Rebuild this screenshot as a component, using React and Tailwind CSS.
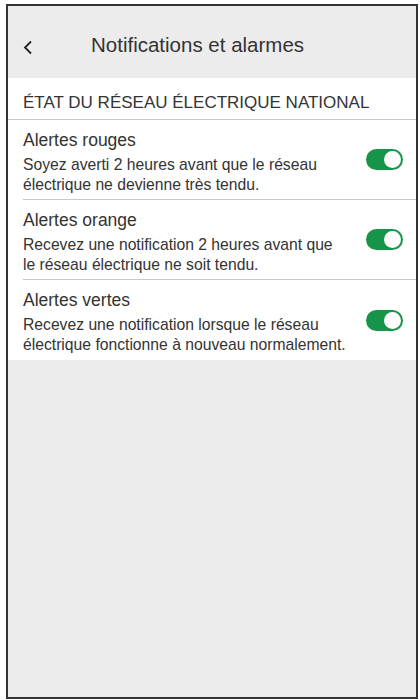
const alerts = [
  {
    title: 'Alertes rouges',
    lines: ['Soyez averti 2 heures avant que le réseau', 'électrique ne devienne très tendu.'],
  },
  {
    title: 'Alertes orange',
    lines: ['Recevez une notification 2 heures avant que', 'le réseau électrique ne soit tendu.'],
  },
  {
    title: 'Alertes vertes',
    lines: ['Recevez une notification lorsque le réseau', 'électrique fonctionne à nouveau normalement.'],
  },
];

const Toggle = () => (
  <div className="w-[37px] h-[21px] rounded-full bg-[#169447] flex items-center justify-end px-[2px] shrink-0">
    <div className="w-[17px] h-[17px] rounded-full bg-white" />
  </div>
);

const AlertRow = ({ title, lines, last }) => (
  <div className={`ml-[15px] h-[80px] flex items-center pr-[13px] ${last ? '' : 'border-b border-[#c8c8c8]'}`}>
    <div className="flex-1 pt-[3px]">
      <p className="text-[17.5px] leading-[24px] mb-[3px] text-[#333]">{title}</p>
      {lines.map((l) => (
        <p key={l} className="text-[15.7px] leading-[20px] text-[#333]">{l}</p>
      ))}
    </div>
    <Toggle />
  </div>
);

export default function App() {
  return (
    <div className="w-[420px] h-[700px] bg-white pt-1 pl-1.5 pr-0.5 pb-px" style={{ fontFamily: '"Liberation Sans", Arial, sans-serif' }}>
      <div className="h-full border-2 border-[#333] bg-[#ececec] flex flex-col">
        <div className="h-[72px] flex items-center relative pt-[6px]">
          <svg className="absolute left-[15px] top-[34px]" width="10" height="15" viewBox="0 0 10 15">
            <path d="M8 1.5 L2 7.5 L8 13.5" fill="none" stroke="#222" strokeWidth="1.8" />
          </svg>
          <h1 className="ml-[83px] text-[20.5px] text-[#333]">Notifications et alarmes</h1>
        </div>
        <div className="bg-white">
          <div className="h-[42px] flex items-center px-[15px] pt-[8px] border-b border-[#c8c8c8]">
            <span className="text-[17px] text-[#333]">ÉTAT DU RÉSEAU ÉLECTRIQUE NATIONAL</span>
          </div>
          {alerts.map((a, i) => (
            <AlertRow key={a.title} {...a} last={i === alerts.length - 1} />
          ))}
        </div>
      </div>
    </div>
  );
}
